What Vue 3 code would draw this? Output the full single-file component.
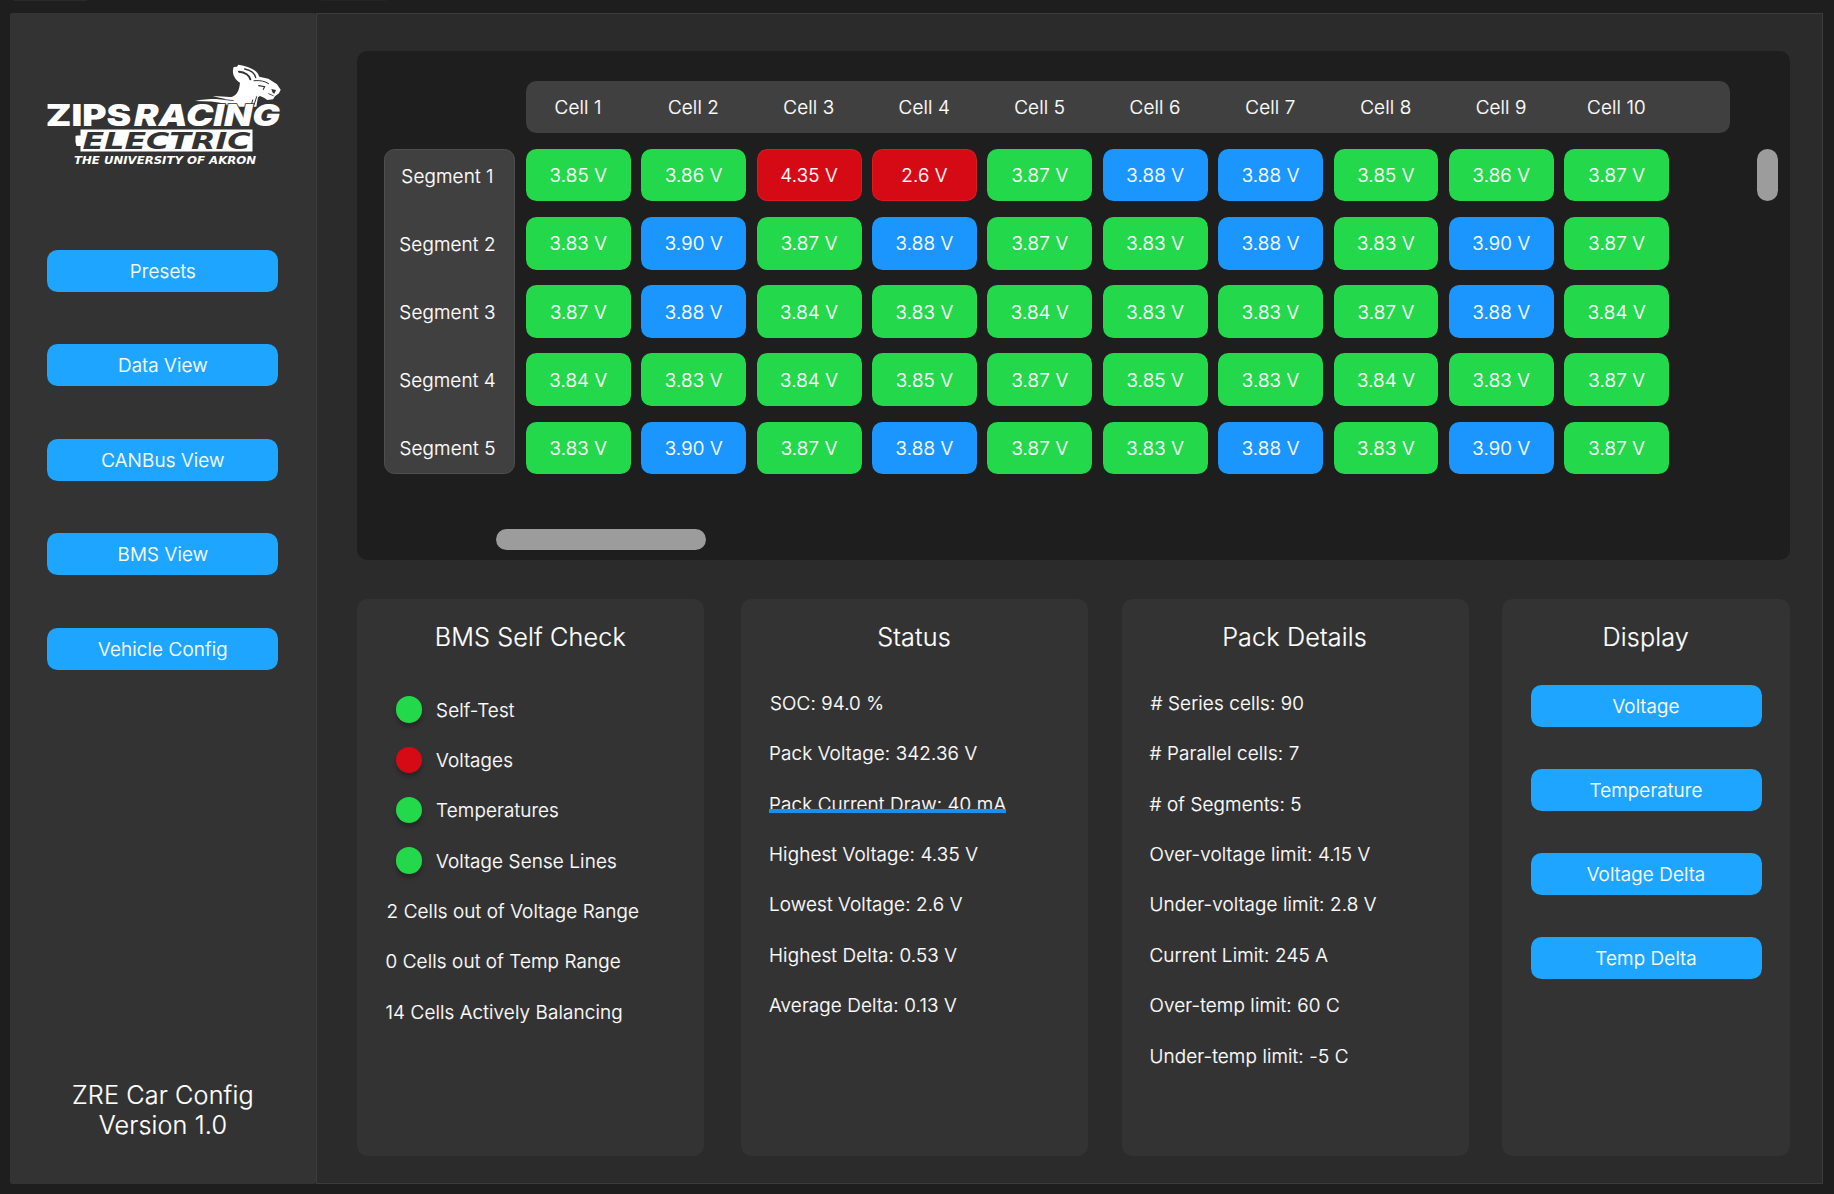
<script setup>
const nav = ['Presets', 'Data View', 'CANBus View', 'BMS View', 'Vehicle Config']
const display = ['Voltage', 'Temperature', 'Voltage Delta', 'Temp Delta']
const segments = [
  ['3.85', '3.86', '4.35', '2.6', '3.87', '3.88', '3.88', '3.85', '3.86', '3.87'],
  ['3.83', '3.90', '3.87', '3.88', '3.87', '3.83', '3.88', '3.83', '3.90', '3.87'],
  ['3.87', '3.88', '3.84', '3.83', '3.84', '3.83', '3.83', '3.87', '3.88', '3.84'],
  ['3.84', '3.83', '3.84', '3.85', '3.87', '3.85', '3.83', '3.84', '3.83', '3.87'],
  ['3.83', '3.90', '3.87', '3.88', '3.87', '3.83', '3.88', '3.83', '3.90', '3.87'],
]
const state = (v) => (v > 4.15 || v < 2.8 ? 'fault' : v >= 3.88 ? 'balancing' : 'ok')
const checks = [
  { label: 'Self-Test', ok: true },
  { label: 'Voltages', ok: false },
  { label: 'Temperatures', ok: true },
  { label: 'Voltage Sense Lines', ok: true },
]
const summary = ['2 Cells out of Voltage Range', '0 Cells out of Temp Range', '14 Cells Actively Balancing']
const status = [
  'SOC: 94.0 %',
  'Pack Voltage: 342.36 V',
  'Pack Current Draw: 40 mA',
  'Highest Voltage: 4.35 V',
  'Lowest Voltage: 2.6 V',
  'Highest Delta: 0.53 V',
  'Average Delta: 0.13 V',
]
const details = [
  '# Series cells: 90',
  '# Parallel cells: 7',
  '# of Segments: 5',
  'Over-voltage limit: 4.15 V',
  'Under-voltage limit: 2.8 V',
  'Current Limit: 245 A',
  'Over-temp limit: 60 C',
  'Under-temp limit: -5 C',
]
</script>

<template>
  <div class="app">
    <aside class="sidebar">
      <svg class="logo" viewBox="17 12 234 104" width="234" height="104">
        <!-- kangaroo, drawn on a grid three times finer than the lettering -->
        <g transform="scale(.33333)">
          <path fill="#fff" d="M495 153C520 147 560 146 590 148L548 139C575 139 598 142 607 140C622 134 628 120 630 98C614 88 604 70 611 51L621 50L625 44C650 48 674 57 683 70L688 80L715 86L741 103L752 119L747 130L735 139L729 148L712 150L702 143L690 138L684 142L679 170L600 170L585 161C560 155 530 153 495 153Z" />
          <g fill="none" stroke="#333" stroke-linecap="round">
            <path d="M627 65C645 66 659 77 661 88" stroke-width="6" />
            <path d="M644 57C662 61 675 70 677 83" stroke-width="4" />
            <path d="M672 92C690 90 706 94 716 101" stroke-width="3" />
            <path d="M686 107L704 110L700 118" stroke-width="3.500" />
            <path d="M716 131L730 137" stroke-width="2.500" />
            <path d="M680 140L672 165M668 150L664 165" stroke-width="3" />
            <path d="M562 146L610 152" stroke-width="2.500" />
          </g>
          <path fill="#333" d="M724 117L738 120L733 131L728 128Z" />
        </g>
        <g fill="#fff">
          <text x="15.700" y="76" class="heavy" font-size="29.800" textLength="85.500" lengthAdjust="spacingAndGlyphs">ZIPS</text>
          <text x="104" y="76" class="heavy slant outlined" font-size="29.800" textLength="146" lengthAdjust="spacingAndGlyphs">RACING</text>
          <path d="M50.500 79.400H222.500V101.600H50.500V96H46.500L45.500 92V86L47 85.400H50.500Z" />
          <text x="44" y="114.300" class="tag" font-size="10.600" textLength="182" lengthAdjust="spacingAndGlyphs">THE UNIVERSITY OF AKRON</text>
        </g>
        <text x="52.500" y="99.200" class="tag" fill="#333" font-size="22.800" textLength="168" lengthAdjust="spacingAndGlyphs">ELECTRIC</text>
      </svg>
      <nav class="nav">
        <button v-for="n in nav" :key="n" class="btn">{{ n }}</button>
      </nav>
      <p class="version">ZRE Car Config<br />Version 1.0</p>
    </aside>

    <main class="main">
      <section class="matrix">
        <div class="cols">
          <span v-for="n in 10" :key="n">Cell {{ n }}</span>
        </div>
        <div class="body">
          <div class="segs">
            <span v-for="n in 5" :key="n">Segment {{ n }}</span>
          </div>
          <div class="grid">
            <template v-for="(row, r) in segments" :key="r">
              <span v-for="(v, c) in row" :key="c" class="cell" :class="state(+v)">{{ v }} V</span>
            </template>
          </div>
          <div class="vbar"></div>
        </div>
        <div class="hbar"></div>
      </section>

      <div class="cards">
        <section class="card check">
          <h2>BMS Self Check</h2>
          <ul class="checks">
            <li v-for="c in checks" :key="c.label">
              <i class="dot" :class="c.ok ? 'ok' : 'fault'"></i>{{ c.label }}
            </li>
          </ul>
          <ul class="lines">
            <li v-for="s in summary" :key="s">{{ s }}</li>
          </ul>
        </section>
        <section class="card status">
          <h2>Status</h2>
          <ul class="lines">
            <li v-for="(s, i) in status" :key="s"><span :class="{ marked: i === 2 }">{{ s }}</span></li>
          </ul>
        </section>
        <section class="card details">
          <h2>Pack Details</h2>
          <ul class="lines">
            <li v-for="d in details" :key="d">{{ d }}</li>
          </ul>
        </section>
        <section class="card display">
          <h2>Display</h2>
          <div class="choices">
            <button v-for="d in display" :key="d" class="btn">{{ d }}</button>
          </div>
        </section>
      </div>
    </main>
  </div>
</template>

<style>
body { background: #1e1e1e; }
</style>

<style scoped>
* { box-sizing: border-box; }
.app {
  height: 1194px;
  padding: 13px 11px 10px 9.500px;
  display: flex;
  background:
    linear-gradient(#2a2a2a, #2a2a2a) 14px 0 / 73px 1px no-repeat,
    linear-gradient(#242424, #242424) 321px 0 / 65px 1px no-repeat,
    #1e1e1e;
  color: #fff;
  font: 300 18.880px/22.840px Inter, sans-serif;
  letter-spacing: .14px;
  -webkit-text-stroke: .2px;
}
.sidebar {
  width: 306.500px;
  display: flex;
  flex-direction: column;
  background: #333;
  border-radius: 2px;
  padding: 49px 0 0 37.900px;
}
.logo { display: block; flex: none; letter-spacing: 0; -webkit-text-stroke: 0; }
.heavy { font-family: Inter, sans-serif; font-weight: 900; }
.slant { font-style: italic; }
.outlined { stroke: #333; stroke-width: 1.500px; paint-order: stroke; }
.tag { font-family: "DejaVu Sans", sans-serif; font-weight: 700; font-style: italic; }
.nav { margin-top: 83.500px; display: flex; flex-direction: column; gap: 52.600px; }
.btn {
  width: 231px;
  height: 42px;
  padding: 3px 0 0;
  border: 0;
  border-radius: 10.500px;
  background: #1ea5ff;
  color: #fff;
  font: inherit;
  letter-spacing: inherit;
  text-align: center;
}
.version { margin: auto 37.400px 43.200px 0; text-align: center; font-size: 25.180px; line-height: 30.500px; width: 231px; }
.main {
  flex: 1;
  background: #2b2b2b;
  border: 1px solid #3c3c3c;
  padding: 36.500px 32px 0 40px;
}
.matrix { height: 509.500px; background: #1e1e1e; border-radius: 10.500px; padding: 30.500px 12px 0 27px; }
.cols {
  width: 1204px;
  height: 52.400px;
  margin-left: 141.700px;
  padding-top: 3px;
  border-radius: 10.500px;
  background: #404040;
  display: grid;
  grid-template-columns: repeat(10, 104.900px);
  column-gap: 10.490px;
  align-items: center;
  text-align: center;
}
.body { display: flex; margin-top: 15.600px; }
.segs {
  width: 131px;
  height: 325.200px;
  padding: 1.800px 4px 0 0;
  border: 1px solid #4f4f4f;
  border-radius: 10.500px;
  background: #404040;
  display: grid;
  grid-template-rows: repeat(5, 50.400px);
  row-gap: 17.770px;
  align-items: center;
  text-align: center;
}
.grid {
  margin-left: 10.900px;
  display: grid;
  grid-template-columns: repeat(10, 104.900px);
  grid-auto-rows: 52.450px;
  gap: 15.730px 10.490px;
}
.cell { display: flex; align-items: center; justify-content: center; border-radius: 10.500px; padding-top: 3px; }
.ok { background: #23d84a; }
.balancing { background: #1b96ff; }
.fault { background: #d60a15; }
.cell.fault { box-shadow: inset 0 0 0 1px rgba(255, 255, 255, .07); }
.vbar { width: 21px; height: 52.400px; margin-left: auto; border-radius: 10.500px; background: #9c9c9c; }
.hbar { width: 210px; height: 21px; margin: 54.500px 0 0 112.300px; border-radius: 10.500px; background: #9c9c9c; }
.cards { display: flex; margin-top: 39px; height: 557px; }
.card { width: 347px; background: #333; border-radius: 10.500px; padding: 23.300px 0 0 28.500px; }
.status { margin-left: 37px; padding-left: 28px; }
.details { margin-left: 33.500px; padding-left: 28px; }
.display { margin-left: 33.500px; width: 288px; padding-left: 28.500px; }
h2 { margin: 0; font-size: 25.180px; line-height: 30.500px; font-weight: inherit; text-align: center; padding-right: 29px; }
ul { margin: 40.200px 0 0; padding: 0; list-style: none; display: flex; flex-direction: column; gap: 27.520px; }
.lines li:first-child { padding-left: 1px; }
.checks { margin-top: 47.200px; gap: 27.400px; }
.checks + ul { margin-top: 27.500px; }
.checks li { display: flex; align-items: center; padding-left: 10px; height: 22.840px; }
.dot { width: 26.600px; height: 26.600px; margin: -5.500px 14px -2px 0; border-radius: 50%; box-shadow: 0 4px 4px rgba(0, 0, 0, .25); }
.marked { position: relative; }
.marked::after { content: ''; position: absolute; left: 0; right: 0; bottom: 3px; height: 4px; background: #1e8fe8; }
.choices { margin-top: 32.200px; display: flex; flex-direction: column; gap: 41.900px; }
</style>
